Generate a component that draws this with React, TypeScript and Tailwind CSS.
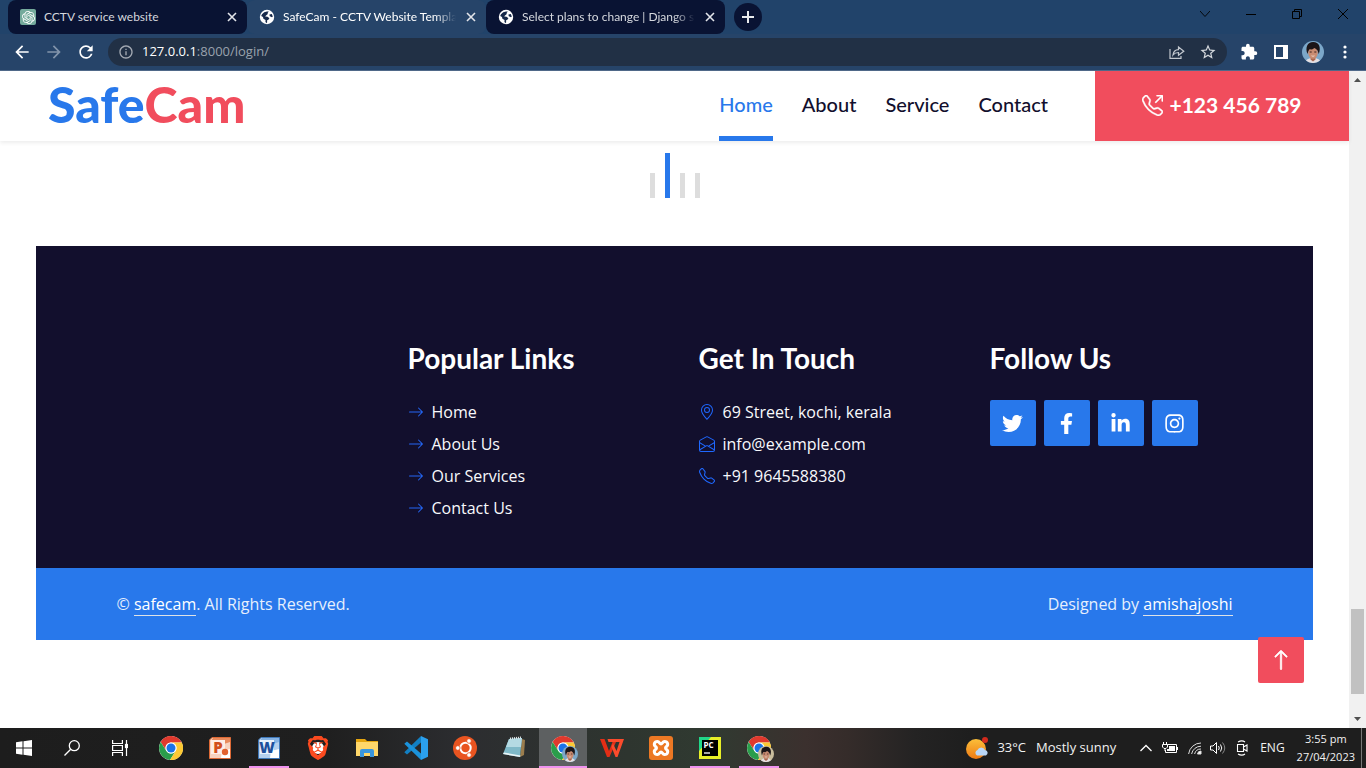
import React from "react";
import {
  BsArrowRight,
  BsArrowUp,
  BsEnvelopeOpen,
  BsGeoAlt,
  BsTelephone,
  BsTelephoneOutbound,
} from "react-icons/bs";
import { FaFacebookF, FaInstagram, FaLinkedinIn, FaTwitter } from "react-icons/fa";
import { MdArrowBack, MdArrowForward, MdExtension, MdRefresh, MdStarOutline, MdInfoOutline } from "react-icons/md";
import { SiBrave, SiOpenai } from "react-icons/si";

const uiFont = "font-['Open_Sans','Noto_Sans',sans-serif]";

function Globe() {
  return (
    <svg viewBox="0 0 16 16" className="size-4 shrink-0" aria-hidden="true">
      <circle cx="8" cy="8" r="7.2" fill="#fff" />
      <path
        d="M3 5.2 5.2 3.2 8 2.4 9.8 2.6 8.6 4 8.8 5 7 6.4 6.2 7.4 8.6 7.8 10.4 9.2 9.6 10.6 8 11.4 8.2 13.2 7.2 14.2 6.4 12.6 6.6 11 4.4 9.8 4 8 2.2 7ZM10.4 5.4 12.8 5 13.8 7.4 13 8.2 10.8 7.2Z"
        fill="#16294a"
      />
    </svg>
  );
}

function CloseIcon() {
  return (
    <svg viewBox="0 0 10 10" className="size-[10px]" aria-hidden="true">
      <path d="M1 1 9 9M9 1 1 9" stroke="#e3e5ea" strokeWidth="1.6" />
    </svg>
  );
}

type TabProps = { title: string; active?: boolean; gpt?: boolean };

function Tab({ title, active, gpt }: TabProps) {
  return (
    <div
      className={`flex h-[34px] w-[239px] shrink-0 items-center rounded-lg pl-3 pr-[10px] ${
        active ? "bg-[#264469] text-white" : "bg-[#091333] text-[#d5d8de]"
      }`}
    >
      {gpt ? (
        <span className="flex size-4 shrink-0 items-center justify-center rounded-[2px] bg-[#74aa9c]">
          <SiOpenai className="size-[13px] text-white" />
        </span>
      ) : (
        <Globe />
      )}
      <span
        className={`ml-2 min-w-0 flex-1 whitespace-nowrap font-['Lato','Open_Sans',sans-serif] text-[12px] ${
          gpt ? "" : "[mask-image:linear-gradient(to_right,#000_88%,transparent)]"
        }`}
      >
        {title}
      </span>
      <button type="button" aria-label="Close tab" className="ml-[10px]">
        <CloseIcon />
      </button>
    </div>
  );
}

function BrowserChrome() {
  return (
    <div className={`shrink-0 border-b border-[#50698a] bg-[#264469] ${uiFont}`}>
      <div className="flex h-[34px] bg-[#21436a] pl-2">
        <Tab title="CCTV service website" gpt />
        <Tab title="SafeCam - CCTV Website Templat" active />
        <Tab title="Select plans to change | Django s" />
        <button
          type="button"
          aria-label="New tab"
          className="ml-[9px] mt-[3px] flex size-7 items-center justify-center rounded-full bg-[#091333]"
        >
          <svg viewBox="0 0 12 12" className="size-3" aria-hidden="true">
            <path d="M6 0V12M0 6H12" stroke="#e8eaed" strokeWidth="2" />
          </svg>
        </button>
        <div className="ml-auto flex h-7 items-center">
          <button type="button" aria-label="Search tabs" className="flex w-[46px] justify-center">
            <svg viewBox="0 0 10 10" className="size-[10px]" fill="none" stroke="#05080c">
              <path d="M0 2 5 7.5 10 2" />
            </svg>
          </button>
          <button type="button" aria-label="Minimize" className="flex w-[46px] justify-center">
            <svg viewBox="0 0 10 10" className="size-[10px]" fill="none" stroke="#000">
              <path d="M0 5.5H10" />
            </svg>
          </button>
          <button type="button" aria-label="Restore" className="flex w-[46px] justify-center">
            <svg viewBox="0 0 10 10" className="size-[10px]" fill="none" stroke="#000">
              <path d="M.5 2.5H7.5V9.5H.5ZM2.5 2.5V.5H9.5V7.5H7.5" />
            </svg>
          </button>
          <button type="button" aria-label="Close" className="flex w-[46px] justify-center">
            <svg viewBox="0 0 10 10" className="size-[10px]" fill="none" stroke="#000">
              <path d="M0 0 10 10M10 0 0 10" />
            </svg>
          </button>
        </div>
      </div>
      <div className="flex h-9 items-center pl-3 pr-4 text-white">
        <button type="button" aria-label="Back">
          <MdArrowBack className="size-5" />
        </button>
        <button type="button" aria-label="Forward" className="ml-3 text-[#8294ab]">
          <MdArrowForward className="size-5" />
        </button>
        <button type="button" aria-label="Reload" className="ml-3">
          <MdRefresh className="size-5" />
        </button>
        <div className="ml-3 flex h-7 flex-1 items-center rounded-full bg-[#213045] pl-[10px] pr-[10px]">
          <MdInfoOutline className="size-4 shrink-0 text-[#a5abb4]" />
          <div className="ml-2 flex-1 text-[13px] text-[#9aa2ad]">
            <span className="text-white">127.0.0.1</span>:8000/login/
          </div>
          <button type="button" aria-label="Share">
            <svg viewBox="0 0 16 16" className="size-4" fill="none" stroke="#c3c8cf" strokeWidth="1.2">
              <path d="M1 5V14.4H12V12M4 11C4.5 7.5 6.500 5.800 9.500 5.700V3L14.800 7.200 9.500 11.200V8.500C7 8.500 5.300 9.300 4 11Z" />
            </svg>
          </button>
          <button type="button" aria-label="Bookmark" className="ml-[14px]">
            <MdStarOutline className="size-[18px] text-[#d5d9de]" />
          </button>
        </div>
        <button type="button" aria-label="Extensions" className="ml-[13px]">
          <MdExtension className="size-[18px]" />
        </button>
        <button type="button" aria-label="Side panel" className="ml-4">
          <svg viewBox="0 0 14 14" className="size-[14px]">
            <path d="M0 0H14V14H0ZM2 2V12H9V2Z" fill="#fff" fillRule="evenodd" />
          </svg>
        </button>
        <button type="button" aria-label="Profile" className="ml-[14px]">
          <Face className="size-[22px]" bg="#7ba7c9" />
        </button>
        <button type="button" aria-label="Menu" className="ml-4">
          <svg viewBox="0 0 10 16" className="h-4 w-[10px]" fill="#fff">
            <circle cx="5" cy="3" r="1.600" />
            <circle cx="5" cy="8" r="1.600" />
            <circle cx="5" cy="13" r="1.600" />
          </svg>
        </button>
      </div>
    </div>
  );
}

function Face({ className, bg }: { className: string; bg: string }) {
  return (
    <svg viewBox="0 0 22 22" className={className} aria-hidden="true">
      <circle cx="11" cy="11" r="11" fill={bg} />
      <path d="M4 19.500C6 17.500 8 17 11 17S16 17.500 18 19.500A11 11 0 0 1 4 19.500Z" fill="#e5dfe2" />
      <path d="M8.500 15H13.500V18.500L11 20.500 8.500 18.500Z" fill="#a9674f" />
      <ellipse cx="11" cy="11.500" rx="4.800" ry="6.300" fill="#c98c72" />
      <path d="M5.400 13C3 6 5.500 1.200 11 .9 17 .7 19.300 6 16.800 13L15.600 9.500 14 8 12.500 7 10 8.500 7.500 8.300 6.400 10Z" fill="#1c1518" />
      <path d="M7.700 11H9.700M12.300 11H14.300" stroke="#3a201b" strokeWidth="1" />
      <path d="M9.500 14.800Q11 15.800 12.500 14.800" stroke="#f4e3dc" strokeWidth=".8" fill="none" />
    </svg>
  );
}

const navItems = ["Home", "About", "Service", "Contact"];

function SiteHeader() {
  return (
    <header className="relative flex h-[70px] items-stretch bg-white pl-12 font-['Lato','Open_Sans',sans-serif] shadow-[0_2px_4px_rgba(0,0,0,0.075)]">
      <a href="#home" className="flex items-center pb-1 text-[50px] font-black leading-none text-[#2878eb]">
        <span>
          Safe<span className="text-[#f14d5d]">Cam</span>
        </span>
      </a>
      <nav className="ml-auto flex gap-[29px] pr-[47px] text-[20px] font-medium">
        {navItems.map((item) => (
          <a
            key={item}
            href={`#${item.toLowerCase()}`}
            className={`flex items-center border-b-[5px] ${
              item === "Home" ? "border-[#2878eb] text-[#2878eb]" : "border-transparent text-[#120f2d]"
            }`}
          >
            {item}
          </a>
        ))}
      </nav>
      <a
        href="tel:+123456789"
        className="flex w-[254px] items-center justify-center gap-[6px] bg-[#f14d5d] pb-[2px] text-[21px] font-bold text-white"
      >
        <BsTelephoneOutbound className="size-[21px]" strokeWidth={0.3} />
        +123 456 789
      </a>
    </header>
  );
}

function CarouselDots() {
  return (
    <div className="mt-3 flex items-end justify-center gap-[10px]">
      {[0, 1, 2, 3].map((i) => (
        <button
          key={i}
          type="button"
          aria-label={`Slide ${i + 1}`}
          className={`w-[5px] ${i === 1 ? "h-[45px] bg-[#2878eb]" : "h-[25px] bg-[#dddddd]"}`}
        />
      ))}
    </div>
  );
}

function FooterHeading({ children }: { children: React.ReactNode }) {
  return (
    <h2 className="mb-[26px] whitespace-nowrap font-['Lato','Open_Sans',sans-serif] text-[28px] font-bold leading-8 text-white">
      {children}
    </h2>
  );
}

const popular = ["Home", "About Us", "Our Services", "Contact Us"];
const contacts = [
  { Icon: BsGeoAlt, text: "69 Street, kochi, kerala" },
  { Icon: BsEnvelopeOpen, text: "info@example.com" },
  { Icon: BsTelephone, text: "+91 9645588380" },
];
const socials = [
  { Icon: FaTwitter, label: "Twitter" },
  { Icon: FaFacebookF, label: "Facebook" },
  { Icon: FaLinkedinIn, label: "LinkedIn" },
  { Icon: FaInstagram, label: "Instagram" },
];

function SiteFooter() {
  return (
    <footer className="mx-9 mt-12 font-['Open_Sans','Noto_Sans',sans-serif] text-[16px] leading-6">
      <div className="bg-[#120f2d] pb-12 pt-24">
        <div className="mx-auto grid max-w-[1116px] grid-cols-4 gap-12">
          <div />
          <div>
            <FooterHeading>Popular Links</FooterHeading>
            <ul className="flex flex-col gap-2">
              {popular.map((p) => (
                <li key={p}>
                  <a href="#" className="flex items-center gap-2 text-[#f8f9fc]">
                    <BsArrowRight className="size-4 text-[#2467f5]" />
                    {p}
                  </a>
                </li>
              ))}
            </ul>
          </div>
          <div>
            <FooterHeading>Get In Touch</FooterHeading>
            <ul className="flex flex-col gap-2">
              {contacts.map(({ Icon, text }) => (
                <li key={text} className="flex items-center gap-2 whitespace-nowrap text-[#f8f9fc]">
                  <Icon className="size-4 text-[#1f68ff]" />
                  {text}
                </li>
              ))}
            </ul>
          </div>
          <div>
            <FooterHeading>Follow Us</FooterHeading>
            <div className="flex gap-2">
              {socials.map(({ Icon, label }) => (
                <a
                  key={label}
                  href="#"
                  aria-label={label}
                  className="flex size-[46px] shrink-0 items-center justify-center rounded-[2px] bg-[#2878eb] text-white"
                >
                  <Icon className="size-[21px]" />
                </a>
              ))}
            </div>
          </div>
        </div>
      </div>
      <div className="bg-[#2878eb] py-6 text-[#e6effd]">
        <div className="mx-auto flex max-w-[1116px] justify-between">
          <p>
            ©{" "}
            <a href="#" className="border-b border-[#dee2e6] text-white">
              safecam
            </a>
            . All Rights Reserved.
          </p>
          <p>
            Designed by{" "}
            <a href="#" className="border-b border-[#dee2e6] text-white">
              amishajoshi
            </a>
          </p>
        </div>
      </div>
    </footer>
  );
}

function Scrollbar() {
  return (
    <div className="flex w-[17px] shrink-0 flex-col items-center bg-[#f1f1f1]" aria-hidden="true">
      <svg viewBox="0 0 17 17" className="size-[17px]">
        <path d="M5 11 8.500 7 12 11Z" fill="#505050" />
      </svg>
      <div className="flex-[521]" />
      <div className="w-[13px] flex-[85] bg-[#c1c1c1]" />
      <div className="flex-[17]" />
      <svg viewBox="0 0 17 17" className="size-[17px]">
        <path d="M5 6 8.500 10 12 6Z" fill="#505050" />
      </svg>
    </div>
  );
}

function Chrome({ badge }: { badge?: string }) {
  return (
    <span className="relative block size-6">
      <svg viewBox="0 0 24 24" className="size-6">
        <circle cx="12" cy="12" r="12" fill="#fff" />
        <path d="M12 6.500H22.700A12 12 0 0 0 1.700 6L7.200 14.700A5.500 5.500 0 0 1 12 6.500Z" fill="#e0392d" />
        <path d="M1.700 6A12 12 0 0 0 11 24L16.800 14.700A5.500 5.500 0 0 1 7.200 14.700Z" fill="#2a9d4b" />
        <path d="M22.700 6.500A12 12 0 0 1 11 24L16.800 14.700A5.500 5.500 0 0 0 12 6.500Z" fill="#fcc934" />
        <circle cx="12" cy="12" r="5.500" fill="#fff" />
        <circle cx="12" cy="12" r="4.500" fill="#1a73e8" />
      </svg>
      {badge && (
        <span className="absolute left-[11px] top-[10px]">
          <Face className="size-4" bg={badge} />
        </span>
      )}
    </span>
  );
}

function OfficeIcon({ letter, tone }: { letter: string; tone: "orange" | "blue" }) {
  const orange = tone === "orange";
  return (
    <svg viewBox="0 0 22 22" className="size-[22px]">
      <path d="M3 .5H21.500V21.500H.5V3Z" fill={orange ? "#f8d3bf" : "#b5d0ee"} stroke={orange ? "#dd6a36" : "#3f78b9"} />
      <path d="M4 1H21V5L12 8 2 4Z" fill={orange ? "#e98b5d" : "#86b3e4"} />
      <rect x="2" y="3" width="14" height="14" fill={orange ? "#fdeee6" : "#e7f1fc"} />
      <path d="M13 14 21 12V21H12Z" fill="#fff" />
      {orange && <circle cx="16" cy="15" r="3.200" fill="#e2622e" />}
      <text
        x="9"
        y="16"
        textAnchor="middle"
        fontSize="15"
        fontWeight="800"
        fontFamily="Open Sans"
        fill={orange ? "#d2501b" : "#1d4f9c"}
      >
        {letter}
      </text>
    </svg>
  );
}

type TaskbarApp = { label: string; icon: React.ReactNode; open?: boolean; active?: boolean };

const apps: TaskbarApp[] = [
  { label: "Chrome", icon: <Chrome /> },
  { label: "PowerPoint", icon: <OfficeIcon letter="P" tone="orange" /> },
  { label: "Word", icon: <OfficeIcon letter="W" tone="blue" />, open: true },
  {
    label: "Brave",
    icon: (
      <span className="relative flex size-6 items-center justify-center">
        <span className="absolute size-3 rounded-full bg-white" />
        <SiBrave className="relative size-6 text-[#fb4a1f]" />
      </span>
    ),
  },
  {
    label: "File Explorer",
    icon: (
      <svg viewBox="0 0 22 20" className="h-5 w-[22px]">
        <path d="M0 1H9L11 3H22V18H0Z" fill="#e5a50f" />
        <path d="M0 4H22V18H0Z" fill="#ffd76a" />
        <path d="M4 19V13Q4 11 6 11H16Q18 11 18 13V19H14V15H8V19Z" fill="#3a96dd" />
      </svg>
    ),
  },
  {
    label: "Visual Studio Code",
    icon: (
      <svg viewBox="0 0 24 24" className="size-6">
        <path d="M17 0 24 3.200V20.800L17 24Z" fill="#2ba0ee" />
        <path d="M17 0V6.500L3 18.500 .3 16.200Z" fill="#1280c4" />
        <path d="M17 24V17.500L3 5.500 .3 7.800Z" fill="#1b93dc" />
      </svg>
    ),
  },
  {
    label: "Ubuntu",
    icon: (
      <span className="flex size-6 items-center justify-center rounded-full bg-[#e95420]">
        <svg viewBox="0 0 24 24" className="size-6" fill="none" stroke="#fff">
          <circle cx="12.500" cy="12" r="5.200" strokeWidth="2" />
          <g fill="#fff" stroke="#e95420" strokeWidth=".8">
            <circle cx="4.800" cy="12" r="2.300" />
            <circle cx="16" cy="5" r="2.300" />
            <circle cx="16" cy="19" r="2.300" />
          </g>
        </svg>
      </span>
    ),
  },
  {
    label: "Notepad",
    icon: (
      <svg viewBox="0 0 24 24" className="size-6">
        <path d="M20 3 23 4 22 19 18 21Z" fill="#9b7d4d" />
        <path d="M7 3 20 2 18 21 1 18Z" fill="#7fb9c8" />
        <path d="M7 3 20 2 19 11 4 11Z" fill="#b4dae3" />
        <path d="M1 18 18 21 18.500 19.500 2 16.500Z" fill="#e9f4f6" />
        <path d="M8 2.500 19 1.500" stroke="#e3e9eb" strokeWidth="2" strokeDasharray="1 1" />
      </svg>
    ),
  },
  { label: "Chrome profile 1", icon: <Chrome badge="#7ba7c9" />, open: true, active: true },
  {
    label: "WPS Office",
    icon: (
      <svg viewBox="0 0 24 20" className="h-5 w-6">
        <path d="M0 1H4.500L9 13 12.500 4H16L9.500 19H7Z" fill="#e32e16" />
        <path d="M7.500 1H24L17.500 19H15.500L11.500 9 13 5.500 16.500 13 19.500 4H8.500Z" fill="#fb4b2c" />
      </svg>
    ),
  },
  {
    label: "XAMPP",
    icon: (
      <span className="flex size-6 items-center justify-center rounded-[3px] bg-[#ec7824]">
        <svg viewBox="0 0 24 24" className="size-6" fill="none" stroke="#fff" strokeWidth="3" strokeLinejoin="round">
          <path d="M8.500 5.500C5 5.500 4.500 9 6.500 10.500Q8.500 12 6.500 13.500C4.500 15 5 18.500 8.500 18.500 10.500 18.500 10.500 16 12 16S13.500 18.500 15.500 18.500C19 18.500 19.500 15 17.500 13.500Q15.500 12 17.500 10.500C19.500 9 19 5.500 15.500 5.500 13.500 5.500 13.500 8 12 8S10.500 5.500 8.500 5.500Z" />
        </svg>
      </span>
    ),
  },
  {
    label: "PyCharm",
    icon: (
      <svg viewBox="0 0 22 22" className="size-[22px]">
        <path d="M0 0H22V22H0Z" fill="#e8ef28" />
        <path d="M0 0H12L0 14Z" fill="#21d789" />
        <rect x="3" y="3" width="16" height="16" fill="#000" />
        <text x="4.500" y="11" fontSize="8" fontWeight="700" fontFamily="Open Sans" fill="#fff">
          PC
        </text>
        <path d="M5 16H11" stroke="#fff" strokeWidth="1.300" />
      </svg>
    ),
    open: true,
  },
  { label: "Chrome profile 2", icon: <Chrome badge="#c9bd9c" />, open: true },
];

function Taskbar() {
  return (
    <div
      className={`flex h-10 shrink-0 bg-[linear-gradient(to_right,#1d1d1d_0%,#1f1f1f_24%,#2c2d30_34%,#2e352f_46%,#303a31_52%,#3b302e_59%,#352c2a_62%,#242323_67%,#1e1e1e_71%)] text-[#f2f2f2] ${uiFont}`}
    >
      <button type="button" aria-label="Start" className="flex w-12 items-center justify-center">
        <svg viewBox="0 0 16 16" className="size-4" fill="#fff">
          <path d="M0 2.200 6.500 1.300V7.500H0ZM7.500 1.200 16 0V7.500H7.500ZM0 8.500H6.500V14.700L0 13.800ZM7.500 8.500H16V16L7.500 14.800Z" />
        </svg>
      </button>
      <button type="button" aria-label="Search" className="flex w-12 items-center justify-center">
        <svg viewBox="0 0 16 16" className="size-4" fill="none" stroke="#fff" strokeWidth="1.300">
          <circle cx="10.300" cy="5.700" r="5" />
          <path d="M6.700 9.300 .5 15.500" />
        </svg>
      </button>
      <button type="button" aria-label="Task view" className="flex w-12 items-center justify-center">
        <svg viewBox="0 0 16 16" className="size-4" fill="none" stroke="#fff" strokeWidth="1.200">
          <path d="M.6 0V3.500H10.400V0M.6 16V12.500H10.400V16M.6 5.500H10.400V10.500H.6ZM14.500 0V4M14.500 8V16" />
          <rect x="13.500" y="4.500" width="2" height="3" fill="#fff" />
        </svg>
      </button>
      <div className="ml-[3px] flex gap-px">
        {apps.map((app) => (
          <button
            key={app.label}
            type="button"
            aria-label={app.label}
            className={`flex w-12 flex-col items-center ${app.active ? "bg-[#5d6061]" : ""}`}
          >
            <span className="flex flex-1 items-center pt-[2px]">{app.icon}</span>
            <span className={`h-[2px] ${app.active ? "w-full" : "w-10"} ${app.open ? "bg-[#ee92ee]" : ""}`} />
          </button>
        ))}
      </div>
      <div className="ml-auto flex items-center text-[13px]">
        <svg viewBox="0 0 24 24" className="size-6" aria-hidden="true">
          <defs>
            <linearGradient id="sun" x1="0" y1="0" x2="0" y2="1">
              <stop offset="0" stopColor="#fbbf3a" />
              <stop offset="1" stopColor="#ef7a14" />
            </linearGradient>
          </defs>
          <circle cx="11" cy="13" r="10" fill="url(#sun)" />
          <circle cx="20" cy="4" r="3" fill="#d32a1c" />
          <path d="M12 19.500A3 3 0 0 1 12.500 14 4 4 0 0 1 20 14 2.900 2.900 0 0 1 21 19.500Z" fill="#b9d6f8" />
        </svg>
        <span className="ml-2">33°C</span>
        <span className="ml-[10px]">Mostly sunny</span>
        <svg viewBox="0 0 12 8" className="ml-6 h-2 w-3" fill="none" stroke="#fff" strokeWidth="1.300">
          <path d="M.5 7 6 1.500 11.500 7" />
        </svg>
        <svg viewBox="0 0 16 12" className="ml-[10px] h-3 w-4" fill="none" stroke="#fff">
          <path d="M5.500 2.500H14.500V10.500H3.500V8M15.500 5V8M1.500 0V2.500M4.500 0V2.500M.5 2.500H5.500V5L4 6.500H2L.5 5ZM3 6.500V9" />
          <path d="M7 4H13V9H5V7H7Z" fill="#fff" stroke="none" />
        </svg>
        <svg viewBox="0 0 14 14" className="ml-[10px] size-[14px]" fill="none" stroke="#ddd">
          <path d="M.6 13A12.500 12.500 0 0 1 13 2M3.600 13A9.500 9.500 0 0 1 13 5.200M6.600 13A6.500 6.500 0 0 1 13 8" />
          <path d="M9.500 13A3.500 3.500 0 0 1 13 10V13Z" fill="#fff" />
        </svg>
        <svg viewBox="0 0 16 14" className="ml-2 h-[14px] w-4" fill="none" stroke="#fff">
          <path d="M.5 5H3L6.500 1.500V12.500L3 9H.5ZM8.500 5Q10 7 8.500 9M10.500 3.500Q13 7 10.500 10.500" />
          <path d="M12.500 1.500Q17 7 12.500 12.500" stroke="#888" />
        </svg>
        <svg viewBox="0 0 12 16" className="ml-[10px] h-4 w-3" fill="none" stroke="#fff" strokeWidth="1.100">
          <path d="M1.500 4.500H7.500V11.500H1.500ZM7.500 7 11 5V11L7.500 9M2 2Q6 -.2 9 2M2 14Q6 16.200 9 14" />
        </svg>
        <span className="ml-3 text-[12px]">ENG</span>
        <div className="ml-3 flex flex-col items-center text-[11px] leading-[18px]">
          <span>3:55 pm</span>
          <span>27/04/2023</span>
        </div>
        <div className="ml-[6px] mr-1 h-10 w-px bg-[#777]" />
      </div>
    </div>
  );
}

export default function App() {
  return (
    <div className="flex h-screen flex-col overflow-hidden bg-white">
      <BrowserChrome />
      <div className="flex min-h-0 flex-1">
        <main className="relative min-w-0 flex-1">
          <SiteHeader />
          <CarouselDots />
          <SiteFooter />
          <a
            href="#top"
            aria-label="Back to top"
            className="absolute bottom-[45px] right-[45px] flex size-[46px] items-center justify-center rounded-[2px] bg-[#f14d5d] text-white"
          >
            <BsArrowUp className="size-[22px]" strokeWidth={0.5} />
          </a>
        </main>
        <Scrollbar />
      </div>
      <Taskbar />
    </div>
  );
}
